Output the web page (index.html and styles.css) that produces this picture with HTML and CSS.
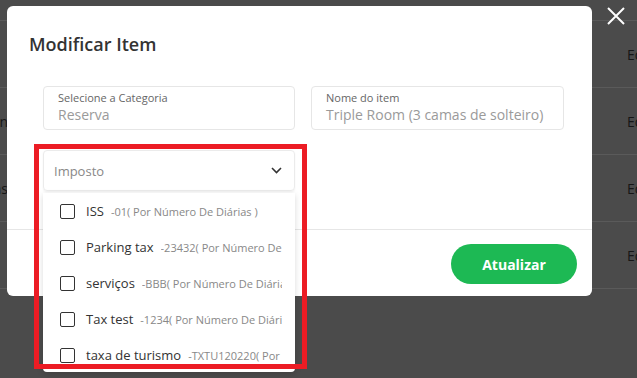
FILE: index.html
```html
<!DOCTYPE html>
<html lang="pt">
<head>
  <meta charset="UTF-8" />
  <meta name="viewport" content="width=device-width, initial-scale=1.0"/>
  <title>Modificar Item</title>
  <link rel="stylesheet" href="styles.css">
</head>
<body>
  <!-- Tabela ao fundo -->
  <div class="page">
    <div class="table-head"></div>
    <div class="row"><span class="cell-left"></span><span class="cell-right">Editar</span></div>
    <div class="row"><span class="cell-left">Reservation</span><span class="cell-right">Editar</span></div>
    <div class="row"><span class="cell-left">Taxas</span><span class="cell-right">Editar</span></div>
    <div class="row"><span class="cell-left"></span><span class="cell-right">Editar</span></div>
  </div>

  <!-- Modal -->
  <div class="overlay">
    <div class="modal">
      <div class="modal-header">
        <h2>Modificar Item</h2>
      </div>
      <div class="modal-body">
        <div class="fields">
          <div class="field">
            <label>Selecione a Categoria</label>
            <div class="value">Reserva</div>
          </div>
          <div class="field">
            <label>Nome do item</label>
            <div class="value">Triple Room (3 camas de solteiro)</div>
          </div>
        </div>
        <div class="select-wrap">
          <div class="select">
            <span>Imposto</span>
            <svg width="11" height="7" viewBox="0 0 11 7"><path d="M1 1l4.5 4.5L10 1" fill="none" stroke="#333" stroke-width="1.6"/></svg>
          </div>
          <div class="dropdown">
            <div class="option"><span class="check"></span><span class="name">ISS</span><span class="code">-01( Por Número De Diárias )</span></div>
            <div class="option"><span class="check"></span><span class="name">Parking tax</span><span class="code">-23432( Por Número De Diárias )</span></div>
            <div class="option"><span class="check"></span><span class="name">serviços</span><span class="code">-BBB( Por Número De Diárias )</span></div>
            <div class="option"><span class="check"></span><span class="name">Tax test</span><span class="code">-1234( Por Número De Diárias )</span></div>
            <div class="option"><span class="check"></span><span class="name">taxa de turismo</span><span class="code">-TXTU120220( Por Número De Diárias )</span></div>
          </div>
          <div class="highlight"></div>
        </div>
      </div>
      <div class="modal-footer">
        <button class="btn-green">Atualizar</button>
      </div>
    </div>
    <div class="close">
      <svg width="20" height="20" viewBox="0 0 20 20"><path d="M2 2l16 16M18 2L2 18" stroke="#fff" stroke-width="2"/></svg>
    </div>
  </div>
</body>
</html>
```

FILE: styles.css
```css
body {
  margin: 0;
  font-family: "Open Sans", "Noto Sans", sans-serif;
  background: #4b4b4b;
  overflow: hidden;
}
.page {
  height: 378px;
}
.table-head {
  height: 20px;
  border-bottom: 1px solid #5a5a5a;
}
.row {
  height: 66px;
  border-bottom: 1px solid #5a5a5a;
  display: flex;
  align-items: center;
  justify-content: space-between;
  font-size: 14px;
  color: #161616;
}
.cell-left {
  width: 8px;
  overflow: hidden;
  white-space: nowrap;
  direction: rtl;
}
.cell-right {
  width: 10px;
  overflow: hidden;
  white-space: nowrap;
}
.overlay {
  position: absolute;
  left: 0;
  top: 0;
  right: 0;
  bottom: 0;
}
.modal {
  position: relative;
  margin: 6px 0 0 7px;
  width: 585px;
  height: 290px;
  background: #fff;
  border-radius: 6px;
  display: flex;
  flex-direction: column;
}
.modal-header {
  padding: 26px 22px 0 22px;
  height: 54px;
  box-sizing: border-box;
}
.modal-header h2 {
  margin: 0;
  font-size: 18px;
  line-height: 24px;
  font-weight: 600;
  color: #333;
}
.modal-body {
  padding: 26px 28px 0 36px;
  flex: 1;
}
.fields {
  display: grid;
  grid-template-columns: 252px 253px;
  gap: 16px;
}
.field {
  height: 44px;
  box-sizing: border-box;
  border: 1px solid #e6e6e6;
  border-radius: 4px;
  padding: 4px 14px 0 14px;
}
.field label {
  display: block;
  font-size: 11px;
  color: #666;
  line-height: 14px;
}
.field .value {
  font-size: 14px;
  color: #9a9a9a;
  line-height: 19px;
  white-space: nowrap;
}
.select-wrap {
  position: relative;
  margin-top: 20px;
  width: 252px;
}
.select {
  height: 41px;
  box-sizing: border-box;
  border: 1px solid #ebebeb;
  border-radius: 4px;
  padding: 0 12px 0 10px;
  display: flex;
  align-items: center;
  justify-content: space-between;
  font-size: 13px;
  color: #888;
  box-shadow: 0 1px 2px rgba(0,0,0,0.06);
}
.dropdown {
  position: absolute;
  left: 0;
  top: 43px;
  width: 252px;
  height: 179px;
  background: #fff;
  border-radius: 0 0 4px 4px;
  box-shadow: 0 2px 6px rgba(0,0,0,0.15);
  overflow: hidden;
  z-index: 2;
}
.option {
  height: 36px;
  display: flex;
  align-items: center;
  padding-left: 17px;
  padding-right: 13px;
  white-space: nowrap;
  overflow: hidden;
}
.check {
  flex: none;
  width: 15px;
  height: 15px;
  box-sizing: border-box;
  border: 1.5px solid #333;
  border-radius: 2px;
  margin-right: 11px;
}
.name {
  font-size: 13px;
  color: #333;
  font-weight: 500;
  margin-right: 7px;
}
.code {
  font-size: 11px;
  color: #888;
  overflow: hidden;
}
.highlight {
  position: absolute;
  left: -9px;
  top: -6px;
  width: 273px;
  height: 225px;
  box-sizing: border-box;
  border: 5px solid #ec1c24;
  z-index: 3;
  pointer-events: none;
}
.modal-footer {
  border-top: 1px solid #e6e6e6;
  height: 67px;
  display: flex;
  justify-content: flex-end;
  align-items: flex-start;
  padding: 14px 15px 0 0;
  box-sizing: border-box;
}
.btn-green {
  width: 126px;
  height: 40px;
  border: none;
  border-radius: 20px;
  background: #1db954;
  color: #fff;
  font-family: "Open Sans", sans-serif;
  font-size: 14px;
  font-weight: 700;
}
.close {
  position: absolute;
  left: 606px;
  top: 6px;
}
```
